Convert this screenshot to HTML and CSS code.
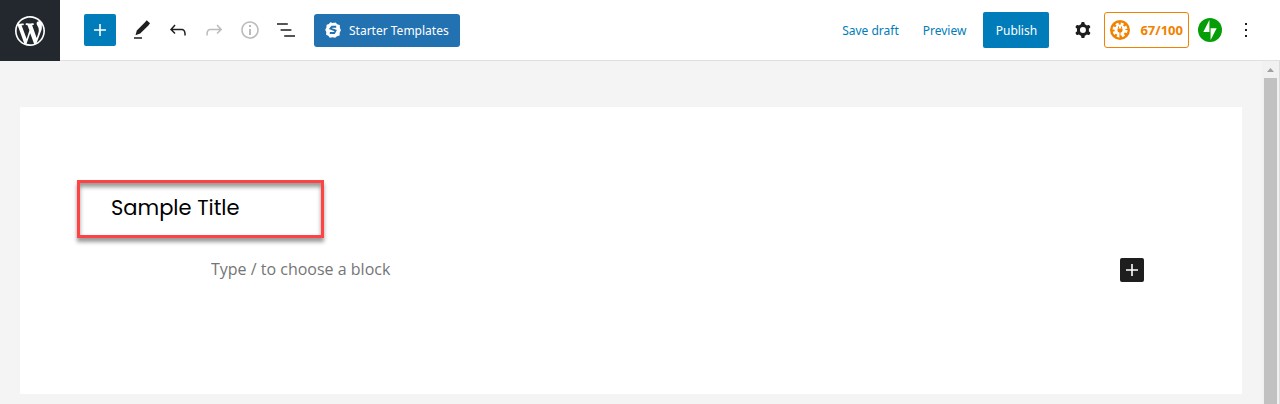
FILE: index.html
```html
<!DOCTYPE html>
<html lang="en">
<head>
  <meta charset="UTF-8">
  <meta name="viewport" content="width=device-width, initial-scale=1.0">
  <title>Edit Post</title>
  <link rel="stylesheet" href="styles.css">
</head>
<body>
  <header class="header">
    <a class="logo" href="#" aria-label="View posts">
      <svg width="36" height="36" viewBox="-2 -2 24 24"><path d="M20 10c0-5.51-4.49-10-10-10C4.48 0 0 4.49 0 10c0 5.52 4.48 10 10 10 5.51 0 10-4.48 10-10zM7.78 15.37L4.37 6.22c.55-.02 1.17-.08 1.17-.08.5-.06.44-1.13-.06-1.11 0 0-1.45.11-2.37.11-.18 0-.37 0-.58-.01C4.12 2.69 6.87 1.11 10 1.11c2.33 0 4.45.87 6.05 2.34-.68-.11-1.65.39-1.65 1.58 0 .74.45 1.36.9 2.1.35.61.55 1.36.55 2.46 0 1.49-1.4 5-1.4 5l-3.03-8.37c.54-.02.82-.17.82-.17.5-.05.44-1.25-.06-1.22 0 0-1.44.12-2.38.12-.87 0-2.33-.12-2.33-.12-.5-.03-.56 1.2-.06 1.22l.92.08 1.26 3.41zM17.41 10c.24-.64.74-1.87.43-4.25.7 1.29 1.05 2.71 1.05 4.25 0 3.29-1.73 6.24-4.4 7.78.97-2.59 1.94-5.2 2.92-7.78zM6.1 18.09C3.12 16.65 1.11 13.53 1.11 10c0-1.3.23-2.48.72-3.59C3.25 10.3 4.67 14.2 6.1 18.09zm4.03-6.63l2.58 6.98c-.86.29-1.76.45-2.71.45-.79 0-1.57-.11-2.29-.33.81-2.38 1.62-4.74 2.42-7.1z"/></svg>
    </a>

    <div class="toolbar">
      <button class="add-btn" aria-label="Add block">
        <svg width="24" height="24" viewBox="0 0 24 24"><path d="M11.2 6h1.6v5.2H18v1.6h-5.2V18h-1.6v-5.2H6v-1.6h5.2z"/></svg>
      </button>
      <div class="tools">
        <button class="icon-btn" aria-label="Tools">
          <svg width="24" height="24" viewBox="0 0 24 24"><path d="M16.7 2.3l3.300 2.900-1.600 2.200-8.200 8.200-4.700 1.600 1.300-4.800 8.200-8.200z"/><path class="underline" d="M4 19h8v2H4z"/></svg>
        </button>
        <button class="icon-btn" aria-label="Undo">
          <svg width="24" height="24" viewBox="0 0 24 24"><path d="M18.3 11.7c-.6-.6-1.4-.9-2.3-.9H6.7l2.9-3.3-1.1-1-4.5 5L8.5 16l1-1-2.7-2.7H16c.5 0 .9.2 1.3.5 1 1 1 3.4 1 4.5v.3h1.5v-.2c0-1.5 0-4.3-1.5-5.7z"/></svg>
        </button>
        <button class="icon-btn" aria-label="Redo" disabled>
          <svg width="24" height="24" viewBox="0 0 24 24"><path d="M15.6 6.5l-1.1 1 2.9 3.3H8c-.9 0-1.7.3-2.3.9-1.4 1.5-1.4 4.2-1.4 5.6v.2h1.5v-.3c0-1.1 0-3.5 1-4.5.3-.3.7-.5 1.3-.5h9.2L14.5 15l1.1 1.1 4.6-4.6-4.6-5z"/></svg>
        </button>
        <button class="icon-btn" aria-label="Details" disabled>
          <svg width="24" height="24" viewBox="0 0 24 24"><path d="M12 3.2c-4.8 0-8.8 3.9-8.8 8.8 0 4.8 3.9 8.8 8.8 8.8 4.8 0 8.8-3.9 8.8-8.8 0-4.8-4-8.8-8.8-8.8zm0 16c-4 0-7.2-3.3-7.2-7.2C4.8 8 8 4.8 12 4.8s7.2 3.3 7.2 7.2c0 4-3.2 7.2-7.2 7.2zM11 17h2v-6h-2v6zm0-8h2V7h-2v2z"/></svg>
        </button>
        <button class="icon-btn" aria-label="List view">
          <svg width="24" height="24" viewBox="0 0 24 24"><path d="M13.8 5.2H3v1.5h10.8V5.2zm-3.6 12v1.5H21v-1.5H10.2zm7.2-6H6.6v1.5h10.8v-1.5z"/></svg>
        </button>
      </div>
      <button class="templates-btn">
        <svg width="16" height="16" viewBox="0 0 16 16">
          <path class="badge" d="M5.2.3l2.6.6 2.8-.5 1.6 1.8 2.6.8.1 2.8 1 2.5-1.2 2.4-.1 2.7-2.6.9-1.8 1.5-2.6-.6-2.8.5-1.5-1.9-2.2-1.1.2-2.7L.2 7.8l1.2-2.4.2-2.6L4 2.1z"/>
          <path class="mark" d="M11.200 4.700H7L5.500 6.600l5 2-1.300 2.500H4.800"/>
        </svg>
        Starter Templates
      </button>
    </div>

    <div class="actions">
      <button class="link-btn">Save draft</button>
      <button class="link-btn">Preview</button>
      <button class="publish-btn">Publish</button>
      <button class="icon-btn settings" aria-label="Settings">
        <svg width="24" height="24" viewBox="0 0 24 24"><path fill-rule="evenodd" d="M10.289 4.836A1 1 0 0111.275 4h1.306a1 1 0 01.987.836l.244 1.466c.787.26 1.503.679 2.108 1.218l1.393-.522a1 1 0 011.216.437l.653 1.13a1 1 0 01-.23 1.273l-1.148.944a6.025 6.025 0 010 2.435l1.149.946a1 1 0 01.23 1.272l-.653 1.13a1 1 0 01-1.216.437l-1.394-.522c-.605.54-1.32.958-2.108 1.218l-.244 1.466a1 1 0 01-.987.836h-1.306a1 1 0 01-.986-.836l-.244-1.466a5.995 5.995 0 01-2.108-1.218l-1.394.522a1 1 0 01-1.217-.436l-.653-1.131a1 1 0 01.23-1.272l1.149-.946a6.026 6.026 0 010-2.435l-1.148-.944a1 1 0 01-.23-1.272l.653-1.131a1 1 0 011.217-.437l1.393.522a5.994 5.994 0 012.108-1.218l.244-1.466zM14.929 12a3 3 0 11-6 0 3 3 0 016 0z"/></svg>
      </button>
      <button class="score-btn">
        <svg width="20" height="20" viewBox="0 0 20 20">
          <circle class="disc" cx="10" cy="10" r="10"/>
          <circle class="teeth" cx="10" cy="10" r="6"/>
          <circle class="gear" cx="10" cy="10" r="5.500"/>
          <path class="plug" d="M8.500 6.500v2M11.500 6.500v2M10 12v5"/>
          <path class="disc" d="M7.500 8.500h5v2a2 2 0 0 1-2 2h-1a2 2 0 0 1-2-2z"/>
        </svg>
        67/100
      </button>
      <button class="jetpack-btn" aria-label="Jetpack">
        <svg width="24" height="24" viewBox="0 0 32 32">
          <circle class="green" cx="16" cy="16" r="16"/>
          <path class="bolt" d="M15.2 2.8v15.7H7.1zM16.8 29.200V13.500h8.100z"/>
        </svg>
      </button>
      <button class="icon-btn" aria-label="Options">
        <svg width="24" height="24" viewBox="0 0 24 24"><path d="M13 19h-2v-2h2v2zm0-6h-2v-2h2v2zm0-6h-2V5h2v2z"/></svg>
      </button>
    </div>
  </header>

  <div class="workspace">
    <main class="editor">
      <div class="canvas">
        <h1 class="title">Sample Title</h1>
        <div class="block">
          <input class="block-input" type="text" aria-label="Block" placeholder="Type / to choose a block">
          <button class="inserter" aria-label="Add block">
            <svg width="24" height="24" viewBox="0 0 24 24"><path d="M11.2 6h1.6v5.2H18v1.6h-5.2V18h-1.6v-5.2H6v-1.6h5.2z"/></svg>
          </button>
        </div>
      </div>
    </main>
    <div class="scrollbar">
      <svg class="arrow" width="17" height="17" viewBox="0 0 17 17"><path d="M5 11l3.5-4 3.5 4z"/></svg>
      <div class="thumb"></div>
    </div>
  </div>
</body>
</html>
```

FILE: styles.css
```css
* {
  box-sizing: border-box;
}
body {
  margin: 0;
  height: 100vh;
  display: flex;
  flex-direction: column;
  overflow: hidden;
  font-family: "Noto Sans", sans-serif;
  font-size: 12px;
  color: #1e1e1e;
  background: #f4f4f4;
}
button {
  display: flex;
  align-items: center;
  justify-content: center;
  flex-shrink: 0;
  padding: 0;
  border: none;
  border-radius: 2px;
  background: none;
  color: inherit;
  font: inherit;
  white-space: nowrap;
  cursor: pointer;
}
svg {
  display: block;
  fill: currentColor;
}

/* Header */
.header {
  display: flex;
  align-items: center;
  flex-shrink: 0;
  height: 61px;
  background: #fff;
  border-bottom: 1px solid #e0e0e0;
}
.logo {
  display: flex;
  align-items: center;
  justify-content: center;
  width: 60px;
  height: 61px;
  margin-bottom: -1px;
  background: #23282e;
  color: #fff;
}
.toolbar {
  display: flex;
  align-items: center;
  padding-left: 24px;
}
.add-btn {
  width: 32px;
  height: 32px;
  background: #007cba;
  color: #fff;
}
.tools {
  display: flex;
  gap: 4px;
  margin: 0 12px 0 10px;
}
.icon-btn {
  width: 32px;
  height: 32px;
}
.icon-btn:disabled {
  color: #bbb;
}
.icon-btn .underline {
  fill: #555;
}
.templates-btn {
  gap: 8px;
  height: 33px;
  padding: 0 11px;
  border-radius: 3px;
  background: #2271b1;
  color: #fff;
}
.templates-btn .mark {
  fill: none;
  stroke: #2271b1;
  stroke-width: 2;
}
.actions {
  display: flex;
  align-items: center;
  margin-left: auto;
  padding-right: 18px;
}
.link-btn {
  height: 36px;
  margin-right: 24px;
  color: #007cba;
}
.publish-btn {
  min-width: 66px;
  height: 36px;
  margin-left: -7px;
  background: #007cba;
  color: #fff;
}
.settings {
  margin: 0 5px 0 18px;
}
.score-btn {
  gap: 10px;
  height: 36px;
  padding: 0 5px;
  border: 1px solid #f18200;
  border-radius: 3px;
  color: #f18200;
  font-size: 13px;
  font-weight: 700;
}
.score-btn .teeth {
  fill: none;
  stroke: #fff;
  stroke-width: 3;
  stroke-dasharray: 2.700 2.012;
}
.score-btn .gear {
  fill: #fff;
}
.score-btn .plug {
  fill: none;
  stroke: #f18200;
  stroke-width: 1;
}
.jetpack-btn {
  margin: 0 8px 0 9px;
}
.jetpack-btn .green {
  fill: #069e08;
}
.jetpack-btn .bolt {
  fill: #fff;
}

/* Editor */
.workspace {
  display: flex;
  flex: 1;
  min-height: 0;
}
.editor {
  flex: 1;
  padding: 46px 20px 10px;
}
.canvas {
  height: 100%;
  padding: 73px 98px 0 57px;
  background: #fff;
}
.title {
  width: 247px;
  margin: 0;
  padding: 10px 31px 12px;
  border: 3px solid #ff4343;
  box-shadow: 0 4px 4px rgba(0, 0, 0, 0.4), inset 0 4px 4px rgba(0, 0, 0, 0.4);
  color: #000;
  font-family: Poppins, Inter, sans-serif;
  font-size: 21px;
  font-weight: 400;
  line-height: 30px;
}
.block {
  display: flex;
  align-items: center;
  justify-content: space-between;
  margin-top: 20px;
  padding-left: 134px;
}
.block-input {
  flex: 1;
  height: 24px;
  padding: 0 0 2px;
  border: none;
  outline: none;
  font-family: "Open Sans", sans-serif;
  font-size: 16px;
}
.block-input::placeholder {
  color: #757575;
}
.inserter {
  width: 24px;
  height: 24px;
  background: #1e1e1e;
  color: #fff;
}

/* Scrollbar */
.scrollbar {
  display: flex;
  flex-direction: column;
  width: 18px;
  background: #f1f1f1;
  border-right: 1px solid #dcdcdc;
}
.arrow {
  color: #a0a0a0;
}
.thumb {
  flex: 1;
  margin: 0 2px;
  background: #c1c1c1;
}
```
